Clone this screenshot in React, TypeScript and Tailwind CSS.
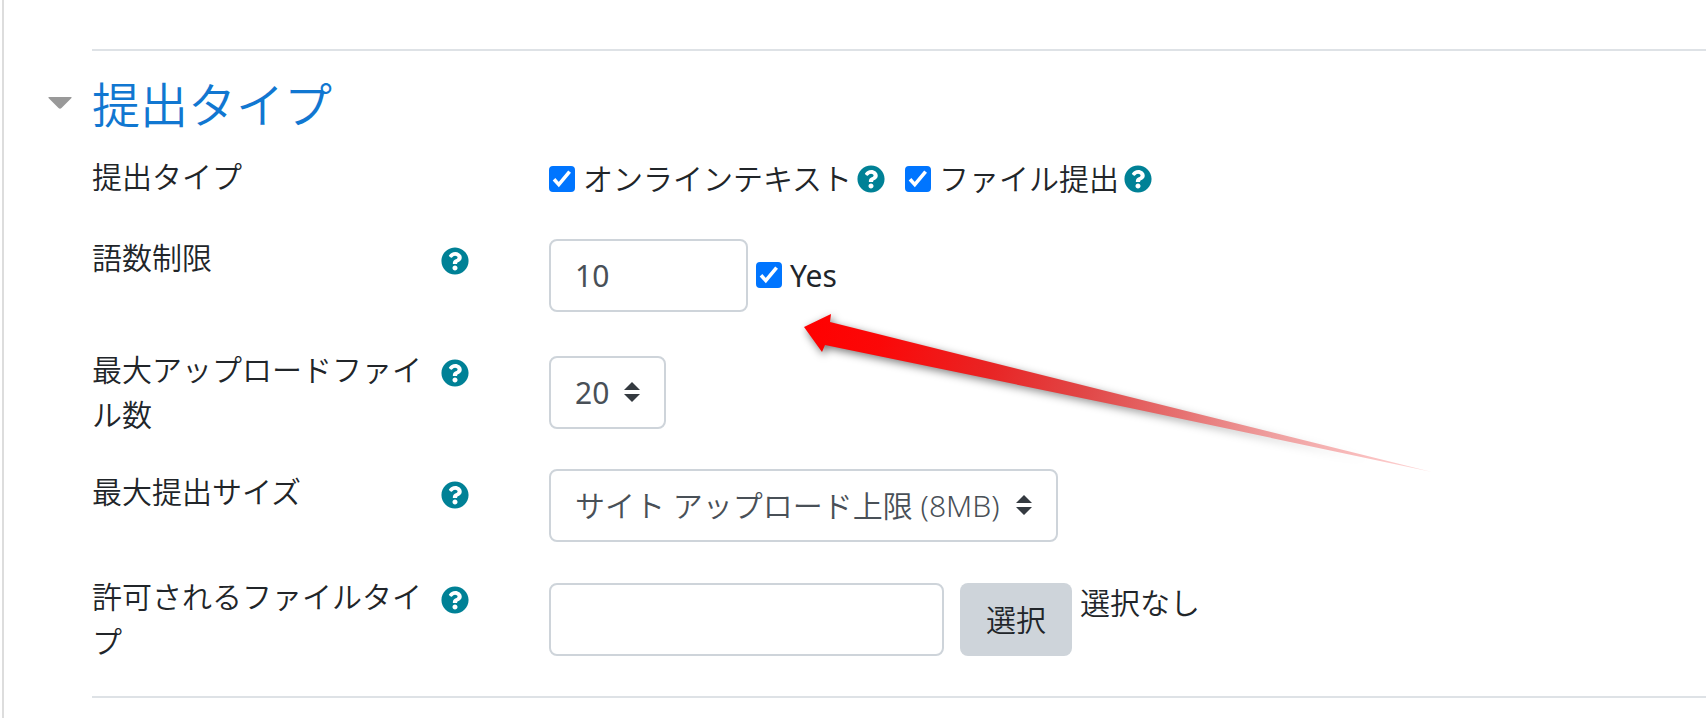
import type { ReactNode } from "react";
import { FaQuestionCircle } from "react-icons/fa";

function HelpIcon({ topic }: { topic: string }) {
  return (
    <button type="button" aria-label={`${topic} ヘルプ`} className="shrink-0 text-[#008196]">
      <FaQuestionCircle className="size-7" />
    </button>
  );
}

function Checkbox({ id, label, className = "" }: { id: string; label: string; className?: string }) {
  return (
    <>
      <span className="grid shrink-0">
        <input
          id={id}
          type="checkbox"
          defaultChecked
          className="peer col-start-1 row-start-1 size-[26px] appearance-none rounded border-2 border-[#767676] bg-white checked:border-[#0075ff] checked:bg-[#0075ff]"
        />
        <svg
          viewBox="0 0 26 26"
          aria-hidden="true"
          className="pointer-events-none invisible col-start-1 row-start-1 size-[26px] fill-none stroke-white stroke-[3.6] peer-checked:visible"
        >
          <path d="M5 13.300 9.800 18.600 20.600 5.600" />
        </svg>
      </span>
      <label htmlFor={id} className={`ml-2 ${className}`}>{label}</label>
    </>
  );
}

function Select({ id, value, className }: { id: string; value: string; className: string }) {
  return (
    <div className="relative">
      <select
        id={id}
        className={`h-[73px] appearance-none rounded-lg border-2 border-[#ced4da] bg-white pl-6 text-[#495057] ${className}`}
      >
        <option>{value}</option>
      </select>
      <svg
        viewBox="0 0 16 20"
        aria-hidden="true"
        className="pointer-events-none absolute top-[26px] right-[26px] h-5 w-4 fill-[#343a40]"
      >
        <path d="M0 8 8 0l8 8zM0 12h16l-8 8z" />
      </svg>
    </div>
  );
}

function Row({ id, label, className = "", children }: { id: string; label: string; className?: string; children: ReactNode }) {
  return (
    <div className={`grid grid-cols-[457px_1fr] items-center ${className}`}>
      <div className="flex items-start self-start">
        <label htmlFor={id} className="w-[333px] shrink-0">{label}</label>
        <span className="mt-3 ml-4 flex">
          <HelpIcon topic={label} />
        </span>
      </div>
      <div className="flex items-center">{children}</div>
    </div>
  );
}

function Arrow() {
  const points = "4,27 31,14 30,22 330,97 632,172 330,108 25,45 22,52";
  return (
    <svg
      viewBox="0 0 660 200"
      aria-hidden="true"
      className="pointer-events-none absolute top-[300px] left-[800px] h-[200px] w-[660px]"
    >
      <defs>
        <linearGradient id="arrow-fill" gradientUnits="userSpaceOnUse" x1="4" y1="27" x2="632" y2="172">
          <stop offset="0" stopColor="#ff0000" />
          <stop offset="0.12" stopColor="#fb0808" />
          <stop offset="0.3" stopColor="#e82525" />
          <stop offset="0.45" stopColor="#e14848" />
          <stop offset="0.6" stopColor="#e67171" />
          <stop offset="0.75" stopColor="#efa0a0" />
          <stop offset="0.9" stopColor="#fac0c0" />
          <stop offset="1" stopColor="#fdd8d8" />
        </linearGradient>
        <linearGradient id="arrow-shade" gradientUnits="userSpaceOnUse" x1="4" y1="27" x2="632" y2="172">
          <stop offset="0" stopColor="#000" stopOpacity="0.55" />
          <stop offset="0.5" stopColor="#000" stopOpacity="0.4" />
          <stop offset="0.9" stopColor="#000" stopOpacity="0" />
        </linearGradient>
        <filter id="arrow-blur" x="-10%" y="-20%" width="120%" height="140%">
          <feGaussianBlur stdDeviation="4" />
        </filter>
      </defs>
      <polygon points={points} transform="translate(2 3)" fill="url(#arrow-shade)" filter="url(#arrow-blur)" />
      <polygon points={points} fill="url(#arrow-fill)" />
    </svg>
  );
}

export default function App() {
  return (
    <div className="relative min-h-screen bg-white pl-[2px] font-['Noto_Sans','Noto_Sans_CJK_JP',sans-serif] text-[30px] leading-[45px] font-[350] text-[#212529]">
      <main lang="ja" className="min-h-screen border-l-2 border-[#dddddd] pt-[49px] pl-[88px]">
        <form className="border-y-2 border-[#dee2e6] pt-[25px]">
          <h3 className="-ml-11 flex items-center gap-5 text-5xl leading-[58px] font-[350]">
            <svg viewBox="0 0 24 12" aria-hidden="true" className="mb-1 h-3 w-6 fill-[#999999]">
              <path d="M1 0h22q1 0 .5 1L13.500 11q-1.500 1.500-3 0L.5 1Q0 0 1 0z" />
            </svg>
            <a href="#submission-types" className="text-[#1177d1]">提出タイプ</a>
          </h3>

          <div id="submission-types" className="mt-5 flex flex-col gap-8 pb-8">
            <fieldset className="grid h-[49px] grid-cols-[457px_1fr]">
              <legend className="float-left">提出タイプ</legend>
              <div className="flex items-center pt-0.5">
                <Checkbox id="online-text" label="オンラインテキスト" />
                <span className="mr-5 ml-[5px] flex"><HelpIcon topic="オンラインテキスト" /></span>
                <Checkbox id="file-submission" label="ファイル提出" />
                <span className="ml-[5px] flex"><HelpIcon topic="ファイル提出" /></span>
              </div>
            </fieldset>

            <Row id="word-limit" label="語数制限" className="h-20">
              <input
                id="word-limit"
                type="text"
                defaultValue="10"
                className="mr-2 h-[73px] w-[199px] rounded-lg border-2 border-[#ced4da] px-6 font-normal text-[#495057]"
              />
              <Checkbox id="word-limit-enabled" label="Yes" className="font-normal" />
            </Row>

            <Row id="max-files" label="最大アップロードファイル数">
              <Select id="max-files" value="20" className="w-[117px] font-normal" />
            </Row>

            <Row id="max-size" label="最大提出サイズ">
              <Select id="max-size" value="サイト アップロード上限 (8MB)" className="w-[509px]" />
            </Row>

            <Row id="file-types" label="許可されるファイルタイプ">
              <div className="flex items-start">
                <input
                  id="file-types"
                  type="text"
                  className="h-[73px] w-[395px] rounded-lg border-2 border-[#ced4da] px-6 text-[#495057]"
                />
                <button type="button" className="ml-4 h-[73px] w-28 rounded-lg bg-[#ced4da]">選択</button>
                <span className="ml-2 leading-10">選択なし</span>
              </div>
            </Row>
          </div>
        </form>
      </main>
      <Arrow />
    </div>
  );
}
